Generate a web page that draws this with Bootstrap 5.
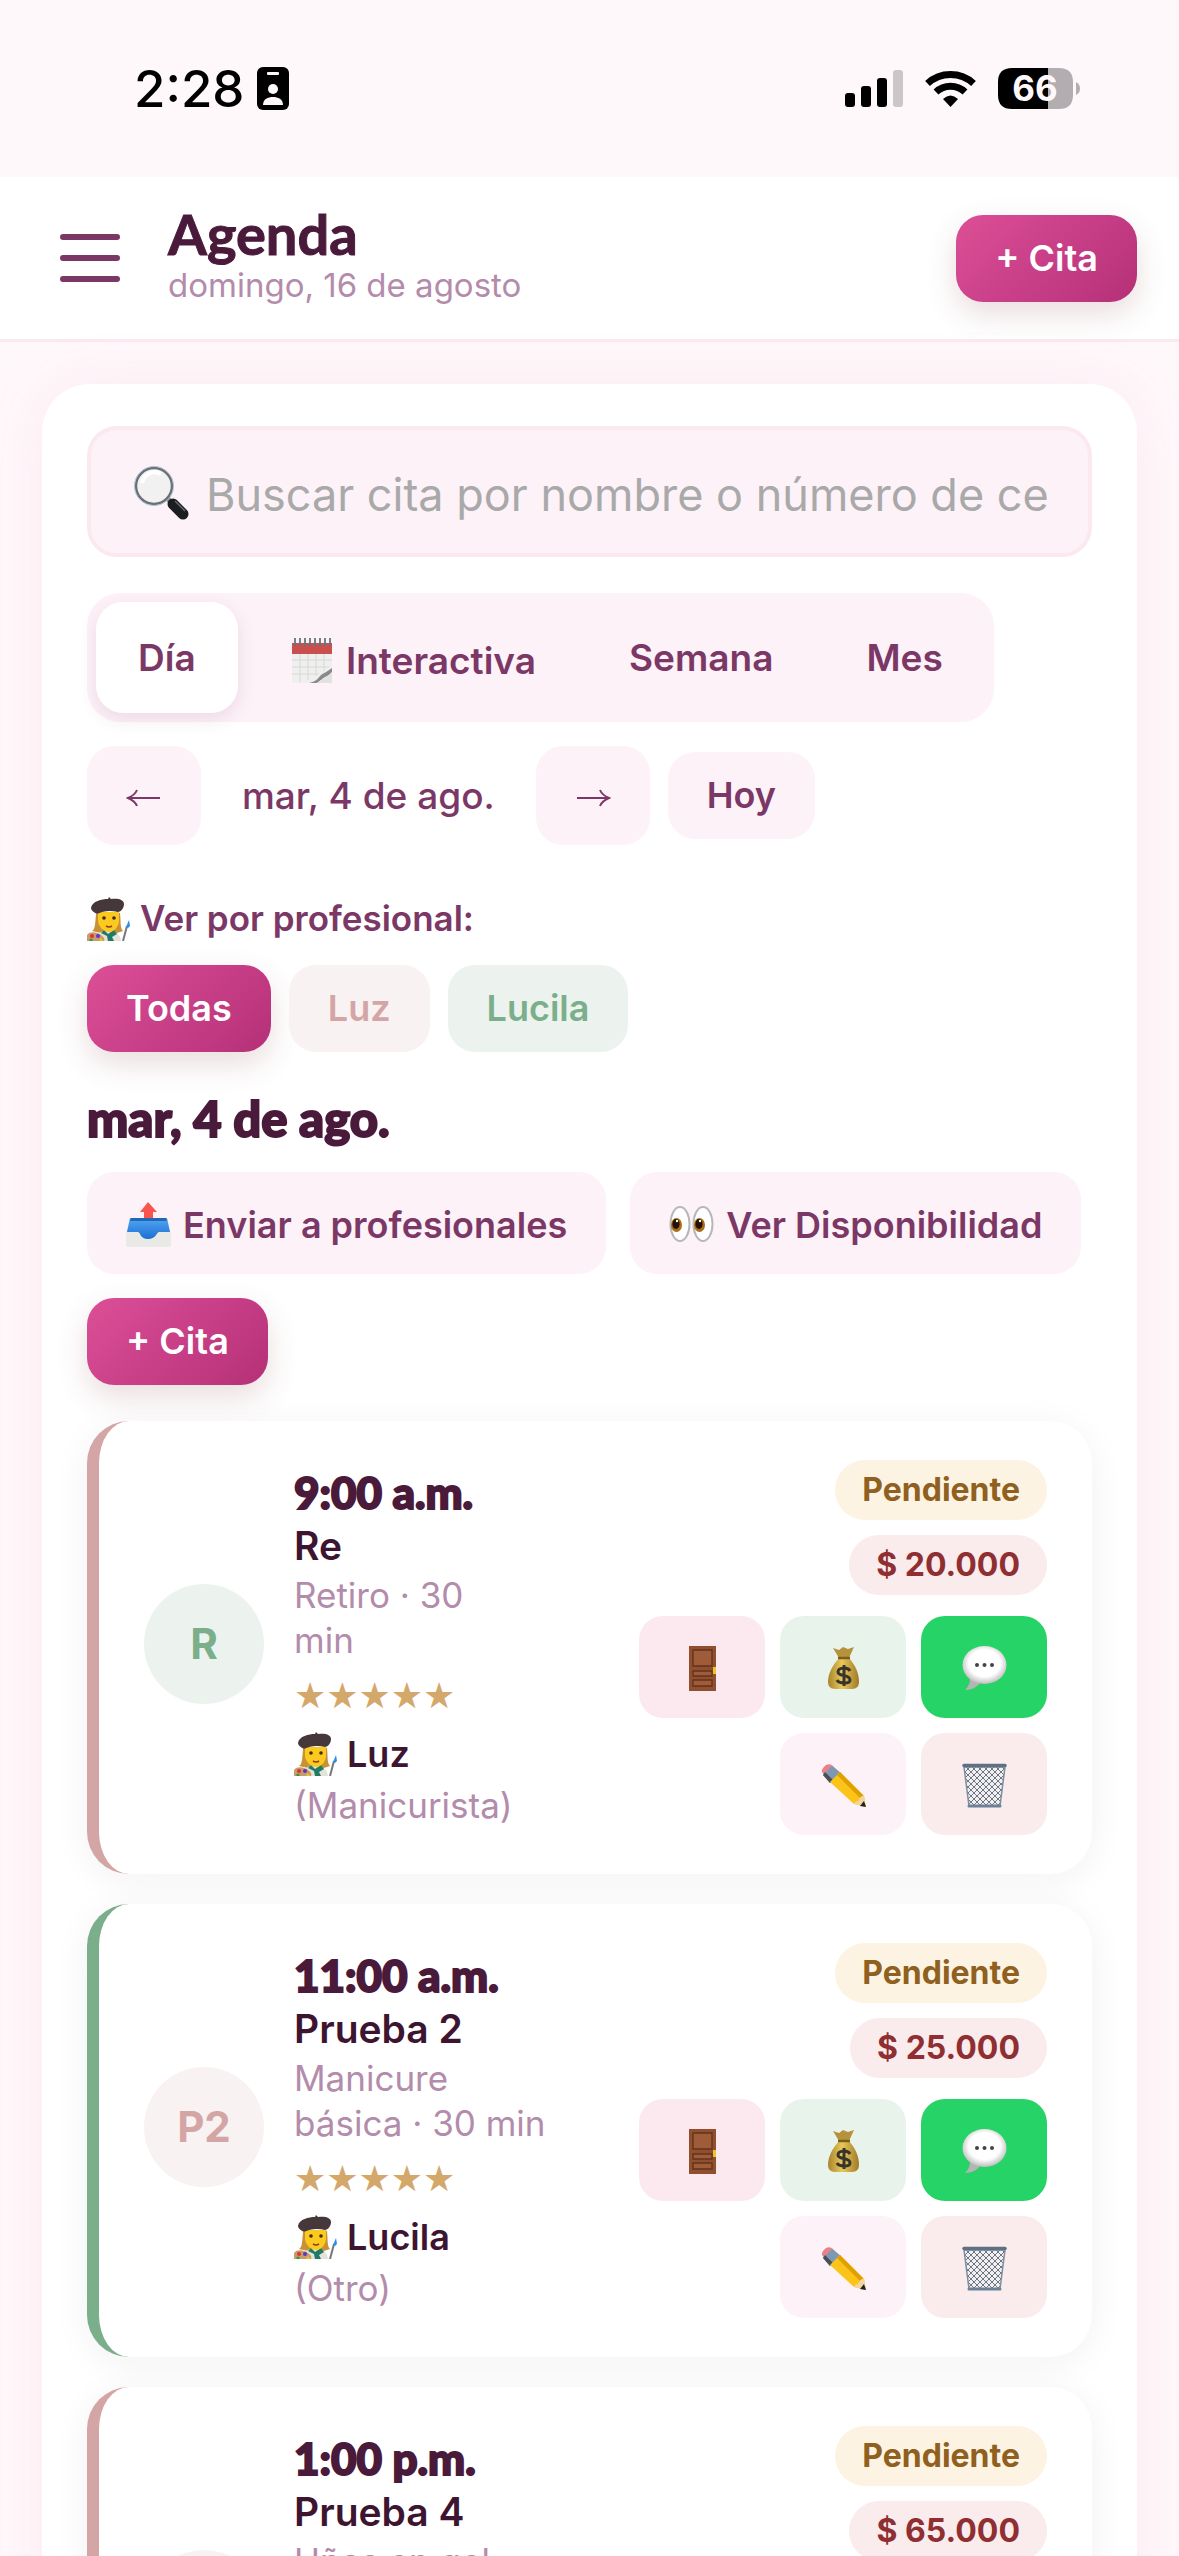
<!DOCTYPE html>
<html lang="es">
<head>
<meta charset="utf-8">
<meta name="viewport" content="width=device-width, initial-scale=1">
<title>Agenda</title>
<link href="https://cdn.jsdelivr.net/npm/bootstrap@5.3.0/dist/css/bootstrap.min.css" rel="stylesheet">
<script src="https://cdn.jsdelivr.net/npm/bootstrap@5.3.0/dist/js/bootstrap.bundle.min.js"></script>
<style>
:root{--plum:#4a1a3b;--grape:#7b3866;--mauve:#b38bab;--blush:#fdf2f8;--rose:#d4a5a5;--sage:#7bae8a}
html,body{height:100%}
body{background:#fff8fb;font-family:Inter,"Liberation Sans",sans-serif;font-size:36px;line-height:45px;color:var(--grape);overflow:hidden}
.status-bar{height:177px;padding:0 98px 0 134px;color:#000}
.clock{font-size:51px;font-weight:500;line-height:60px}
.top-bar{height:165px;padding:0 42px 0 60px;background:#fff;border-bottom:3px solid #fce9f0}
.menu-btn{width:60px;height:60px;border:0;background:none;padding:0}
.display-font{font-family:Lato,"Open Sans",sans-serif;font-weight:900;color:var(--plum);-webkit-text-stroke:2px var(--plum);stroke-linejoin:round}
.page-title{font-size:56px;line-height:54px;font-weight:700;-webkit-text-stroke-width:1px}
.sub{font-size:33px;line-height:48px;color:var(--mauve)}
.pill{height:87px;padding:0 39px;border:0;border-radius:27px;font-size:36px;font-weight:600;line-height:45px;color:var(--grape);background:var(--blush)}
.pill:hover{background:#fbe6f1;color:var(--grape)}
.pill-main,.pill-main:hover{color:#fff;background:linear-gradient(135deg,#dc4f97,#b53078);box-shadow:0 12px 30px rgba(139,64,64,.18)}
.pill-tall{height:102px;padding-top:3px}
.pill-arrow{height:99px;width:114px}
.pill-rose{color:var(--rose);background:#f9f2f2}
.pill-sage{color:var(--sage);background:#ecf3ee}
.panel{margin:42px 42px 0;padding:42px 45px;background:#fff;border-radius:48px;box-shadow:0 0 60px rgba(225,110,160,.1)}
.search{height:131px;padding:5px 41px 0;gap:14px;border:4px solid #fbe9ef;border-radius:30px;background:var(--blush)}
.search input{border:0;outline:0;background:none;font-size:45px;padding:0;min-width:0;color:var(--plum)}
.search input::placeholder{color:#a9a9a9;opacity:1}
.tabs{margin-top:36px;padding:9px;gap:9px;border-radius:33px;background:var(--blush)}
.tabs button{height:111px;padding:0 42px;border:0;border-radius:27px;background:none;font-size:37px;font-weight:600;color:var(--grape)}
.tabs .on{background:#fff;box-shadow:0 6px 18px rgba(123,56,102,.13)}
.tabs .with-icon{padding-top:5px}
.day-nav{margin-top:24px;gap:18px}
.day-now{font-size:37px;font-weight:500;padding:0 23px}
.filter-label{margin-top:51px;gap:8px;font-size:35px;font-weight:600}
.filters{gap:18px}
.day-title{font-size:49px;line-height:60px;margin:36px 0 24px}
.appt{padding:39px 45px;gap:30px;background:#fff;border-left:12px solid var(--rose);border-radius:42px;box-shadow:0 6px 36px rgba(74,26,59,.06)}
.appt.sage{border-color:var(--sage)}
.appts{margin-top:36px;gap:30px}
.face{width:120px;height:120px;margin-bottom:8px;border-radius:50%;font-size:42px;font-weight:700}
.hour{font-size:44px;line-height:54px}
.client{font-size:39px;font-weight:600;line-height:54px;color:#3d1530}
.soft{font-size:35px;color:var(--mauve)}
.stars{font-family:"DejaVu Sans",sans-serif;font-size:36px;line-height:66px;color:#d4a76a}
.pro{line-height:51px}
.pro b{font-weight:600;color:#3d1530}
.tag{height:60px;padding:0 27px;border-radius:30px;font-size:32px;font-weight:700;line-height:60px}
.wait{color:#8f6020;background:#fdf3e2}
.debt{color:#8f2f32;background:#faebec}
.side{gap:15px}
.acts{width:408px;gap:15px;margin-top:6px}
.acts button{width:126px;height:102px;border:0;border-radius:24px;padding:3px 0 0}
.a-door{background:#fbe9ef}.a-pay{background:#e8f4eb}.a-chat{background:#25d366}.a-edit{background:var(--blush)}.a-del{background:#faebec}
.e{width:45px;height:45px;margin-right:3px;display:inline-block;vertical-align:-9px;flex:none}
.pro .e{margin-right:8px}
.acts .e{margin:0}
</style>
</head>
<body>
<svg width="0" height="0" class="position-absolute" aria-hidden="true">
<defs>
<linearGradient id="gBag" x1="0" x2="1"><stop offset="0" stop-color="#a8842c"/><stop offset=".45" stop-color="#e8c95a"/><stop offset="1" stop-color="#a07a26"/></linearGradient>
<radialGradient id="gBub" cx=".5" cy=".45" r=".55"><stop offset=".65" stop-color="#fff"/><stop offset="1" stop-color="#bdbdbd"/></radialGradient>
<linearGradient id="gTray" x1="0" y1="0" x2="0" y2="1"><stop offset="0" stop-color="#51a7f5"/><stop offset="1" stop-color="#1e6fd0"/></linearGradient>
<pattern id="mesh" width="6" height="6" patternUnits="userSpaceOnUse"><path d="M0 0L6 6M6 0L0 6" stroke="#5a6a78" stroke-width=".9"/></pattern>
</defs>
<symbol id="artist" viewBox="0 0 45 45">
<path d="M9 18C8 30 8 33 5 35L14 37H30L36 35C33 32 34 27 33 17Z" fill="#c79135"/>
<path d="M8 45C9 36 15 35 21 35S33 36 34 45Z" fill="#e3e3da"/>
<path d="M17 34L21 38L27 34L30 38L25 41L27 45H21L20 40L14 37Z" fill="#217a63"/>
<path d="M11 16H32V24C32 31 27 36 22 36S11 31 11 24Z" fill="#fcc91f"/>
<circle cx="17" cy="22" r="1.8" fill="#402a18"/><circle cx="27" cy="22" r="1.8" fill="#402a18"/>
<path d="M19 30Q22 32 25 30" stroke="#8c3a22" stroke-width="1.6" fill="none"/>
<path d="M4 12C5 5 15 3 21 3L22 1L24 3C32 2 37 4 37 8C37 12 34 16 31 16C23 14 16 15 10 18C6 16 4 14 4 12Z" fill="#46373a"/>
<path d="M0 39C3 35 10 36 14 39C17 41 18 43 17 45H0Z" fill="#c99b6b"/>
<circle cx="5" cy="40" r="2" fill="#d33"/><circle cx="11" cy="40" r="2" fill="#5a35c8"/><circle cx="4" cy="44" r="1.6" fill="#2a9a4c"/><circle cx="14" cy="44" r="1.6" fill="#e8c520"/>
<path d="M36 45L40 30" stroke="#777" stroke-width="2"/><path d="M39 31L42 24L43 30L41 32Z" fill="#2b8fe6"/>
</symbol>
<symbol id="lens" viewBox="0 0 60 60">
<path d="M35 34L41 40" stroke="#888" stroke-width="5"/><path d="M41 40L51 50" stroke="#1b1d20" stroke-width="11" stroke-linecap="round"/><path d="M43 37L53 47" stroke="#63676c" stroke-width="1.500"/>
<circle cx="22" cy="22" r="18" fill="#f1f1f2" stroke="#6c7075" stroke-width="2.500"/><circle cx="22" cy="22" r="19.500" fill="none" stroke="#a8c0d8" stroke-width="1"/><path d="M10 19A13 13 0 0 1 29 10" stroke="#fff" stroke-width="4" fill="none"/>
</symbol>
<symbol id="pad" viewBox="0 0 45 45">
<path d="M3 5H43V45H3Z" fill="#efefee"/><path d="M3 5H43V16H3Z" fill="#c9504f"/>
<path d="M3 22H43M3 29H40M3 36H30M11 16V44M19 16V42M27 16V38M35 16V33" stroke="#d8d8d8" stroke-width="1"/>
<path d="M43 30C38 34 34 35 31 38C28 42 25 44 20 45H28C32 42 33 41 36 39C39 38 41 36 43 34Z" fill="#8a8a8a"/><path d="M43 34C40 38 34 41 28 45H43Z" fill="#e2e2e0"/>
<path d="M6 0V8M11 0V8M16 0V8M21 0V8M26 0V8M31 0V8M36 0V8M41 0V8" stroke="#66757c" stroke-width="1.800"/>
</symbol>
<symbol id="outbox" viewBox="0 0 45 45">
<path d="M4 16H41L45 31V43Q45 45 43 45H2Q0 45 0 43V31Z" fill="#e9eae6"/><path d="M4 16H41L44 30H33C30 31 30 37 22 37S15 31 12 30H1Z" fill="url(#gTray)"/><path d="M5 16H40L41 19H4Z" fill="#2167b5"/><path d="M22 0L31 10H27V16H18V10H14Z" fill="#f8564c"/>
</symbol>
<symbol id="eyes" viewBox="0 0 45 45">
<ellipse cx="11" cy="22" rx="9.500" ry="17" fill="#fff" stroke="#b8b8b8" stroke-width="2"/><ellipse cx="34" cy="22" rx="9.500" ry="17" fill="#fff" stroke="#b8b8b8" stroke-width="2"/><ellipse cx="7.500" cy="23" rx="5.500" ry="7" fill="#a96f16"/><ellipse cx="30.500" cy="23" rx="5.500" ry="7" fill="#a96f16"/><ellipse cx="7" cy="22" rx="3.600" ry="5" fill="#241006"/><ellipse cx="30" cy="22" rx="3.600" ry="5" fill="#241006"/><circle cx="8" cy="19" r="1.200" fill="#fff"/><circle cx="31" cy="19" r="1.200" fill="#fff"/>
</symbol>
<symbol id="door" viewBox="0 0 45 45">
<path d="M9 0H36V45H9Z" fill="#90502f"/><path d="M13 4H32V20H13ZM13 25H32V30H13ZM13 34H32V40H13Z" fill="#9f5c38" stroke="#63321a" stroke-width="1.300"/><path d="M33 21H36V28H33Z" fill="#f0c22e"/>
</symbol>
<symbol id="money" viewBox="0 0 45 45">
<path d="M12 2L18 4L22 1L27 3L33 1L28 12H18Z" fill="#b7923c"/><path d="M18 12H28C35 20 38 28 38 36Q38 43 31 43H14Q7 43 7 36C7 28 11 20 18 12Z" fill="url(#gBag)"/><path d="M17 12H29" stroke="#7b5f1d" stroke-width="2.500"/>
<path d="M29 25C27 21 17 21 17 26C17 31 29 28 29 34C29 38 18 38 16 34M23 19V40" stroke="#38342c" stroke-width="3" fill="none"/>
</symbol>
<symbol id="bubble" viewBox="0 0 45 45"><path d="M8 32C8 38 6 41 3 44C10 44 15 41 18 37Z" fill="#b4b4b4"/><ellipse cx="22.500" cy="19" rx="22" ry="19" fill="url(#gBub)"/><circle cx="15" cy="19" r="2" fill="#444"/><circle cx="22.500" cy="19" r="2" fill="#444"/><circle cx="30" cy="19" r="2" fill="#444"/></symbol>
<symbol id="pencil" viewBox="0 0 45 45"><path d="M1 9Q0 6 5 2Q9 0 12 3L17 8L7 17Z" fill="#e88288"/><path d="M11 3L20 10L9 20L2 12Z" fill="#7c98b2"/><path d="M2 12L9 20L12 17L4 9Z" fill="#4a4f55"/><path d="M19 9L43 33L45 44L33 41L9 19Z" fill="#fcc418"/><path d="M19 9L43 33L40 36L16 12Z" fill="#e0a000"/><path d="M43 32L45 44L33 41Q34 38 37 38Q38 34 43 32Z" fill="#f2d49c"/><path d="M43 38L45 44L39 43Z" fill="#222"/></symbol>
<symbol id="bin" viewBox="0 0 45 45"><path d="M2 4H43L38 43H7Z" fill="#f3eef0"/><path d="M2 4H43L38 43H7Z" fill="url(#mesh)" stroke="#7d8fa0" stroke-width="1.500"/><path d="M2 2.500H43" stroke="#5d7183" stroke-width="3.500" stroke-linecap="round"/><path d="M7 43H38" stroke="#6d8298" stroke-width="3" stroke-linecap="round"/></symbol>
</svg>

<div class="status-bar d-flex align-items-center justify-content-between">
  <div class="d-flex align-items-center gap-2">
    <span class="clock">2:28</span>
    <svg width="34" height="44" viewBox="0 0 34 44" class="ms-1"><rect x="1" width="32" height="43" rx="6"/><rect x="11" y="5" width="12" height="3" rx="1" fill="#fff8fb"/><circle cx="17" cy="22" r="5" fill="#fff8fb"/><path d="M7 38C7 32 12 30 17 30S27 32 27 38Z" fill="#fff8fb"/></svg>
  </div>
  <svg width="236" height="42" viewBox="0 0 236 42">
    <rect y="25" width="10" height="14" rx="3"/><rect x="16" y="18" width="10" height="21" rx="3"/><rect x="32" y="10" width="10" height="29" rx="3"/><rect x="48" y="2" width="10" height="37" rx="3" fill="#cdc6c9"/>
    <path d="M82.500 15.500A34 34 0 0 1 128.500 15.500" fill="none" stroke="#000" stroke-width="7"/><path d="M91 24A21 21 0 0 1 120 24" fill="none" stroke="#000" stroke-width="7"/><path d="M98 31Q105.500 24 113 31L105.500 39Z"/>
    <path d="M167 0H203V41H167Q153 41 153 27V14Q153 0 167 0Z"/><path d="M203 0H214Q228 0 228 14V27Q228 41 214 41H203Z" fill="#b2adb0"/><path d="M231 14Q235 16 235 20.500T231 27Z" fill="#b2adb0"/>
    <text x="190" y="33" text-anchor="middle" font-family="Inter" font-size="35" font-weight="700" fill="#fff8fb">66</text>
  </svg>
</div>

<header class="top-bar d-flex align-items-center">
  <button class="menu-btn" aria-label="Menú"><svg width="60" height="60" viewBox="0 0 60 60" class="d-block"><path d="M3 9H57M3 30H57M3 51H57" stroke="#7b3866" stroke-width="6" stroke-linecap="round"/></svg></button>
  <div class="ms-5 me-auto">
    <h1 class="display-font page-title m-0">Agenda</h1>
    <div class="sub">domingo, 16 de agosto</div>
  </div>
  <button class="btn pill pill-main">+ Cita</button>
</header>

<main class="panel">
  <label class="search d-flex align-items-center">
    <svg width="60" height="60" class="flex-shrink-0"><use href="#lens"/></svg>
    <input type="text" class="flex-grow-1" placeholder="Buscar cita por nombre o número de ce" aria-label="Buscar cita">
  </label>

  <div class="tabs d-inline-flex">
    <button class="on">Día</button>
    <button class="with-icon"><svg class="e"><use href="#pad"/></svg> Interactiva</button>
    <button>Semana</button>
    <button>Mes</button>
  </div>

  <div class="day-nav d-flex align-items-center">
    <button class="btn pill pill-arrow" aria-label="Anterior"><svg width="36" height="30" viewBox="0 0 36 30" fill="none" stroke="#7b3866" stroke-width="2"><path d="M34 15H2M11 7Q9 12 2 15Q9 18 11 23"/></svg></button>
    <span class="day-now">mar, 4 de ago.</span>
    <button class="btn pill pill-arrow" aria-label="Siguiente"><svg width="36" height="30" viewBox="0 0 36 30" fill="none" stroke="#7b3866" stroke-width="2"><path d="M2 15H34M25 7Q27 12 34 15Q27 18 25 23"/></svg></button>
    <button class="btn pill">Hoy</button>
  </div>

  <div class="filter-label d-flex align-items-center"><svg class="e m-0"><use href="#artist"/></svg>Ver por profesional:</div>
  <div class="d-flex mt-4 filters">
    <button class="btn pill pill-main">Todas</button>
    <button class="btn pill pill-rose">Luz</button>
    <button class="btn pill pill-sage">Lucila</button>
  </div>

  <h2 class="display-font day-title">mar, 4 de ago.</h2>
  <div class="d-flex flex-wrap gap-4">
    <button class="btn pill pill-tall"><svg class="e"><use href="#outbox"/></svg> Enviar a profesionales</button>
    <button class="btn pill pill-tall"><svg class="e"><use href="#eyes"/></svg> Ver Disponibilidad</button>
    <button class="btn pill pill-main">+ Cita</button>
  </div>

  <div class="appts d-flex flex-column">
    <article class="appt d-flex align-items-center">
      <div class="face pill-sage d-flex align-items-center justify-content-center flex-shrink-0">R</div>
      <div class="me-auto">
        <div class="display-font hour">9:00 a.m.</div>
        <div class="client">Re</div>
        <div class="soft">Retiro · 30<br>min</div>
        <div class="stars">★★★★★</div>
        <div class="pro"><svg class="e"><use href="#artist"/></svg><b>Luz</b><br><span class="soft">(Manicurista)</span></div>
      </div>
      <div class="side d-flex flex-column align-items-end">
        <span class="tag wait">Pendiente</span>
        <span class="tag debt">$ 20.000</span>
        <div class="acts d-flex flex-wrap justify-content-end">
          <button class="a-door" aria-label="Salida"><svg class="e"><use href="#door"/></svg></button>
          <button class="a-pay" aria-label="Cobrar"><svg class="e"><use href="#money"/></svg></button>
          <button class="a-chat" aria-label="Mensaje"><svg class="e"><use href="#bubble"/></svg></button>
          <button class="a-edit" aria-label="Editar"><svg class="e"><use href="#pencil"/></svg></button>
          <button class="a-del" aria-label="Eliminar"><svg class="e"><use href="#bin"/></svg></button>
        </div>
      </div>
    </article>

    <article class="appt sage d-flex align-items-center">
      <div class="face pill-rose d-flex align-items-center justify-content-center flex-shrink-0">P2</div>
      <div class="me-auto">
        <div class="display-font hour">11:00 a.m.</div>
        <div class="client">Prueba 2</div>
        <div class="soft">Manicure<br>básica · 30 min</div>
        <div class="stars">★★★★★</div>
        <div class="pro"><svg class="e"><use href="#artist"/></svg><b>Lucila</b><br><span class="soft">(Otro)</span></div>
      </div>
      <div class="side d-flex flex-column align-items-end">
        <span class="tag wait">Pendiente</span>
        <span class="tag debt">$ 25.000</span>
        <div class="acts d-flex flex-wrap justify-content-end">
          <button class="a-door" aria-label="Salida"><svg class="e"><use href="#door"/></svg></button>
          <button class="a-pay" aria-label="Cobrar"><svg class="e"><use href="#money"/></svg></button>
          <button class="a-chat" aria-label="Mensaje"><svg class="e"><use href="#bubble"/></svg></button>
          <button class="a-edit" aria-label="Editar"><svg class="e"><use href="#pencil"/></svg></button>
          <button class="a-del" aria-label="Eliminar"><svg class="e"><use href="#bin"/></svg></button>
        </div>
      </div>
    </article>

    <article class="appt d-flex align-items-center">
      <div class="face pill-rose d-flex align-items-center justify-content-center flex-shrink-0">P4</div>
      <div class="me-auto">
        <div class="display-font hour">1:00 p.m.</div>
        <div class="client">Prueba 4</div>
        <div class="soft">Uñas en gel<br>· 90 min</div>
        <div class="stars">★★★★★</div>
        <div class="pro"><svg class="e"><use href="#artist"/></svg><b>Luz</b><br><span class="soft">(Manicurista)</span></div>
      </div>
      <div class="side d-flex flex-column align-items-end">
        <span class="tag wait">Pendiente</span>
        <span class="tag debt">$ 65.000</span>
        <div class="acts d-flex flex-wrap justify-content-end">
          <button class="a-door" aria-label="Salida"><svg class="e"><use href="#door"/></svg></button>
          <button class="a-pay" aria-label="Cobrar"><svg class="e"><use href="#money"/></svg></button>
          <button class="a-chat" aria-label="Mensaje"><svg class="e"><use href="#bubble"/></svg></button>
          <button class="a-edit" aria-label="Editar"><svg class="e"><use href="#pencil"/></svg></button>
          <button class="a-del" aria-label="Eliminar"><svg class="e"><use href="#bin"/></svg></button>
        </div>
      </div>
    </article>
  </div>
</main>
</body>
</html>
